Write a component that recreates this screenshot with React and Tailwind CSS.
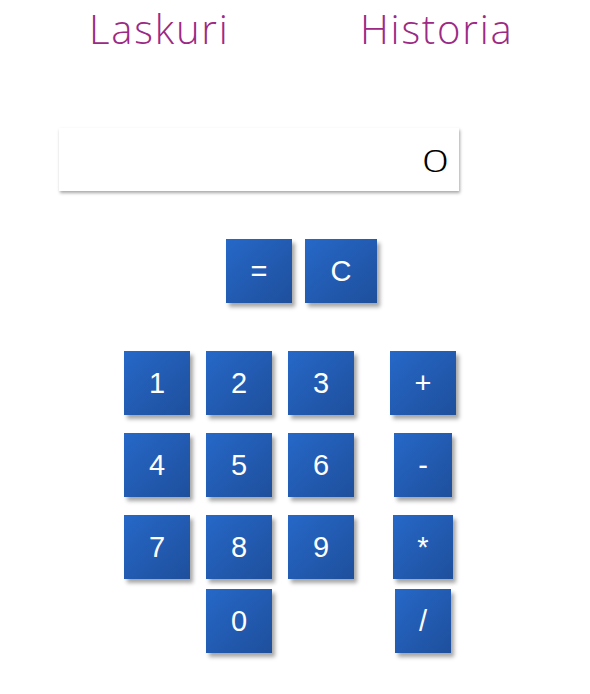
import React, { useState } from 'react';

const Key = ({ label, w = 'w-[66px]', onClick }) => (
  <button
    onClick={onClick}
    className={`${w} h-[64px] shrink-0 bg-linear-to-br from-[#2668c8] to-[#1e4f9c] text-white text-[29px] leading-none shadow-[3px_4px_4px_rgba(0,0,0,0.35)] flex items-center justify-center`}
    style={{ fontFamily: '"Liberation Sans", Arial, sans-serif' }}
  >
    {label}
  </button>
);

export default function App() {
  const [value, setValue] = useState('0');

  const press = (k) => {
    if (k === 'C') return setValue('0');
    if (k === '=') {
      try {
        // eslint-disable-next-line no-new-func
        const r = Function(`return (${value})`)();
        setValue(String(r));
      } catch {
        setValue('0');
      }
      return;
    }
    setValue(value === '0' && /[0-9]/.test(k) ? k : value + k);
  };

  const rows = [
    [['1', '2', '3'], '+', 'w-[66px]'],
    [['4', '5', '6'], '-', 'w-[58px]'],
    [['7', '8', '9'], '*', 'w-[60px]'],
  ];

  return (
    <div className="w-[590px] h-[694px] bg-white overflow-hidden">
      {/* otsikko */}
      <div
        className="flex ml-[89px] pt-[5px] h-[56px] text-[#9c2a84] text-[40px] leading-[48px] font-light tracking-[1.8px]"
        style={{ fontFamily: '"Open Sans", sans-serif' }}
      >
        <a href="#" className="w-[271px]">Laskuri</a>
        <a href="#">Historia</a>
      </div>

      {/* näyttö */}
      <div
        className="ml-[59px] mt-[72px] w-[400px] h-[63px] bg-white shadow-[1px_2px_3px_rgba(0,0,0,0.35)] flex items-center justify-end pr-[10px] text-[32px] font-light text-black"
        style={{ fontFamily: '"Open Sans", sans-serif' }}
      >
        <span className="inline-block origin-right scale-x-[1.5]">{value}</span>
      </div>

      {/* = ja C */}
      <div className="flex ml-[226px] gap-[13px] mt-[48px]">
        <Key label="=" onClick={() => press('=')} />
        <Key label="C" w="w-[72px]" onClick={() => press('C')} />
      </div>

      {/* näppäimistö */}
      <div className="ml-[124px] mt-[48px] flex flex-col gap-[18px]">
        {rows.map(([digits, op, ow]) => (
          <div key={op} className="flex">
            <div className="flex gap-4">
              {digits.map(d => <Key key={d} label={d} onClick={() => press(d)} />)}
            </div>
            <div className="w-[138px] flex justify-center">
              <Key label={op} w={ow} onClick={() => press(op)} />
            </div>
          </div>
        ))}
        <div className="flex -mt-[8px]">
          <div className="flex gap-4">
            <div className="w-[66px]" />
            <Key label="0" onClick={() => press('0')} />
            <div className="w-[66px]" />
          </div>
          <div className="w-[138px] flex justify-center">
            <Key label="/" w="w-[56px]" onClick={() => press('/')} />
          </div>
        </div>
      </div>
    </div>
  );
}
